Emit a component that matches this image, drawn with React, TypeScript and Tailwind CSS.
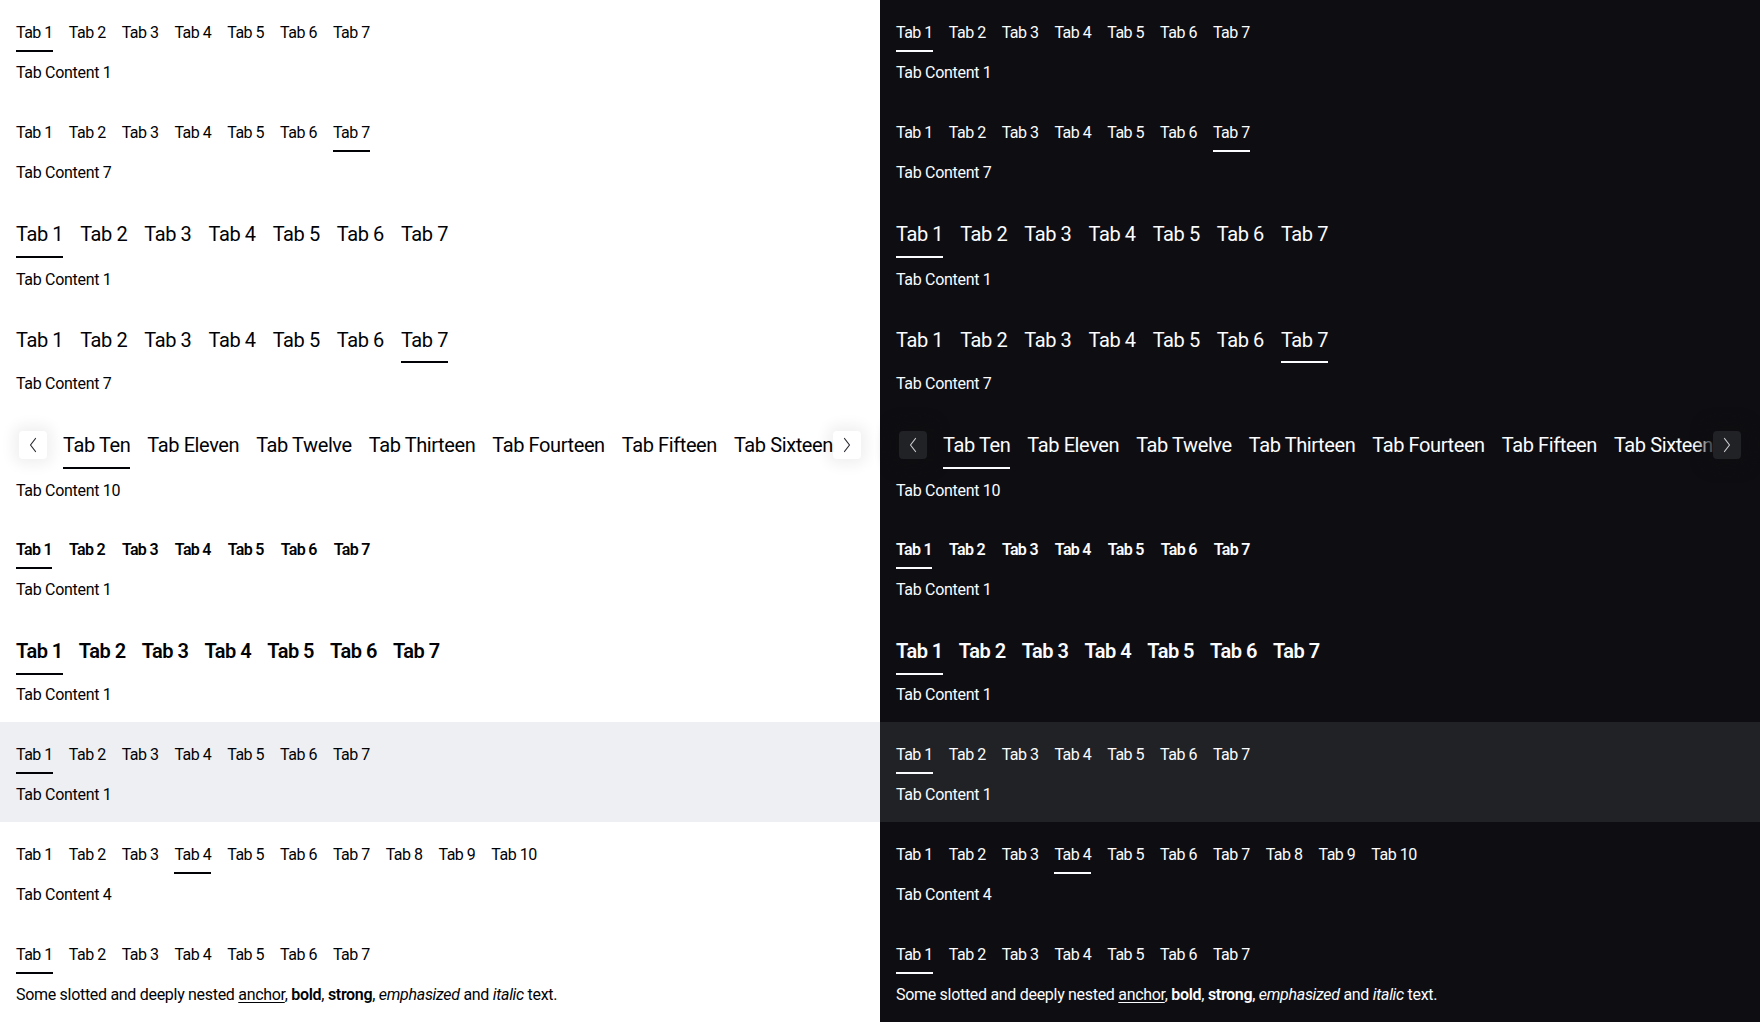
import React from "react";

type Size = "small" | "medium" | "mediumTight";

const seven = ["Tab 1", "Tab 2", "Tab 3", "Tab 4", "Tab 5", "Tab 6", "Tab 7"];
const ten = [...seven, "Tab 8", "Tab 9", "Tab 10"];
const many = ["Tab Ten", "Tab Eleven", "Tab Twelve", "Tab Thirteen", "Tab Fourteen", "Tab Fifteen", "Tab Sixteen"];

function Tab({ label, active, size, bold, dark }: { label: string; active: boolean; size: Size; bold?: boolean; dark: boolean }) {
  const text =
    size === "small"
      ? bold
        ? "text-[16px] leading-[23px] pt-px tracking-[-0.7px] font-semibold"
        : "text-[16px] leading-[23px] pt-px tracking-[-0.5px]"
      : bold
        ? "text-[20px] leading-[31px] pt-px tracking-[-0.5px] font-semibold"
        : "text-[20px] leading-[30px] pt-[2px] tracking-[-0.4px]";
  const bar = size === "small" ? "mt-[6px] h-[1.5px]" : size === "medium" ? "mt-[7px] h-[2px]" : "mt-[6px] h-[2px]";
  const barColor = active ? (dark ? "bg-[#fbfcff]" : "bg-[#010205]") : "bg-transparent";
  return (
    <div className="flex shrink-0 flex-col">
      <span className={`${text} whitespace-nowrap`}>{label}</span>
      <span className={`block ${bar} ${barColor}`} />
    </div>
  );
}

function TabsBar({ tabs, active, size, bold, dark }: { tabs: string[]; active: number; size: Size; bold?: boolean; dark: boolean }) {
  const gap = size === "small" ? (bold ? "gap-[17px]" : "gap-4") : bold ? "gap-[16px]" : "gap-[17px]";
  return (
    <div className={`flex ${gap}`}>
      {tabs.map((t, i) => (
        <Tab key={t} label={t} active={i === active} size={size} bold={bold} dark={dark} />
      ))}
    </div>
  );
}

function Content({ children, className = "" }: { children: React.ReactNode; className?: string }) {
  return <p className={`pt-px text-[16px] leading-[23px] tracking-[-0.3px] ${className}`}>{children}</p>;
}

function Chevron({ dir, dark }: { dir: "left" | "right"; dark: boolean }) {
  return (
    <svg width="28" height="28" viewBox="0 0 28 28" fill="none" stroke={dark ? "#c9cacf" : "#2a2b30"} strokeWidth={1.2} strokeLinecap="round" strokeLinejoin="round">
      {dir === "left" ? <path d="M16.5 7.5 11.5 14l5 6.5" /> : <path d="M11.5 7.5 16.5 14l-5 6.5" />}
    </svg>
  );
}

function ScrollSection({ dark }: { dark: boolean }) {
  const btn = dark
    ? "bg-[#212225] shadow-[0_0_14px_8px_rgba(14,14,18,0.9)]"
    : "bg-white shadow-[0_0_14px_6px_rgba(0,0,0,0.06)]";
  return (
    <section className="relative h-[106px] px-4 pt-[17px]">
      <div className="ml-[47px] mr-[3px] overflow-hidden">
        <TabsBar tabs={many} active={0} size="medium" dark={dark} />
      </div>
      <Content className="mt-[9px]">Tab Content 10</Content>
      <button className={`absolute left-[19px] top-[20px] flex size-7 items-center justify-center rounded ${btn}`}>
        <Chevron dir="left" dark={dark} />
      </button>
      <button className={`absolute right-[19px] top-[20px] flex size-7 items-center justify-center rounded ${btn}`}>
        <Chevron dir="right" dark={dark} />
      </button>
    </section>
  );
}

function Half({ dark }: { dark: boolean }) {
  return (
    <div className={dark ? "bg-[#0e0e12] text-[#fbfcff]" : "bg-white text-[#010205]"}>
      <section className="h-[100px] px-4 pt-[20px]">
        <TabsBar tabs={seven} active={0} size="small" dark={dark} />
        <Content className="mt-2">Tab Content 1</Content>
      </section>
      <section className="h-[100px] px-4 pt-[20px]">
        <TabsBar tabs={seven} active={6} size="small" dark={dark} />
        <Content className="mt-2">Tab Content 7</Content>
      </section>
      <section className="h-[106px] px-4 pt-[17px]">
        <TabsBar tabs={seven} active={0} size="medium" dark={dark} />
        <Content className="mt-[9px]">Tab Content 1</Content>
      </section>
      <section className="h-[105px] px-4 pt-[17px]">
        <TabsBar tabs={seven} active={6} size="mediumTight" dark={dark} />
        <Content className="mt-[8px]">Tab Content 7</Content>
      </section>
      <ScrollSection dark={dark} />
      <section className="h-[100px] px-4 pt-[20px]">
        <TabsBar tabs={seven} active={0} size="small" bold dark={dark} />
        <Content className="mt-2">Tab Content 1</Content>
      </section>
      <section className="h-[105px] px-4 pt-[18px]">
        <TabsBar tabs={seven} active={0} size="mediumTight" bold dark={dark} />
        <Content className="mt-[7px]">Tab Content 1</Content>
      </section>
      <section className={`h-[100px] px-4 pt-[20px] ${dark ? "bg-[#212225]" : "bg-[#eeeff2]"}`}>
        <TabsBar tabs={seven} active={0} size="small" dark={dark} />
        <Content className="mt-2">Tab Content 1</Content>
      </section>
      <section className="h-[100px] px-4 pt-[20px]">
        <TabsBar tabs={ten} active={3} size="small" dark={dark} />
        <Content className="mt-2">Tab Content 4</Content>
      </section>
      <section className="h-[100px] px-4 pt-[20px]">
        <TabsBar tabs={seven} active={0} size="small" dark={dark} />
        <Content className="mt-2">
          Some slotted and deeply nested <a className="underline underline-offset-2">anchor</a>, <b className="font-semibold">bold</b>,{" "}
          <strong className="font-semibold">strong</strong>, <em>emphasized</em> and <i>italic</i> text.
        </Content>
      </section>
    </div>
  );
}

export default function App() {
  return (
    <div className="grid h-[1022px] w-[1760px] grid-cols-2 overflow-hidden font-['Roboto','Noto_Sans',sans-serif]">
      <Half dark={false} />
      <Half dark />
    </div>
  );
}
